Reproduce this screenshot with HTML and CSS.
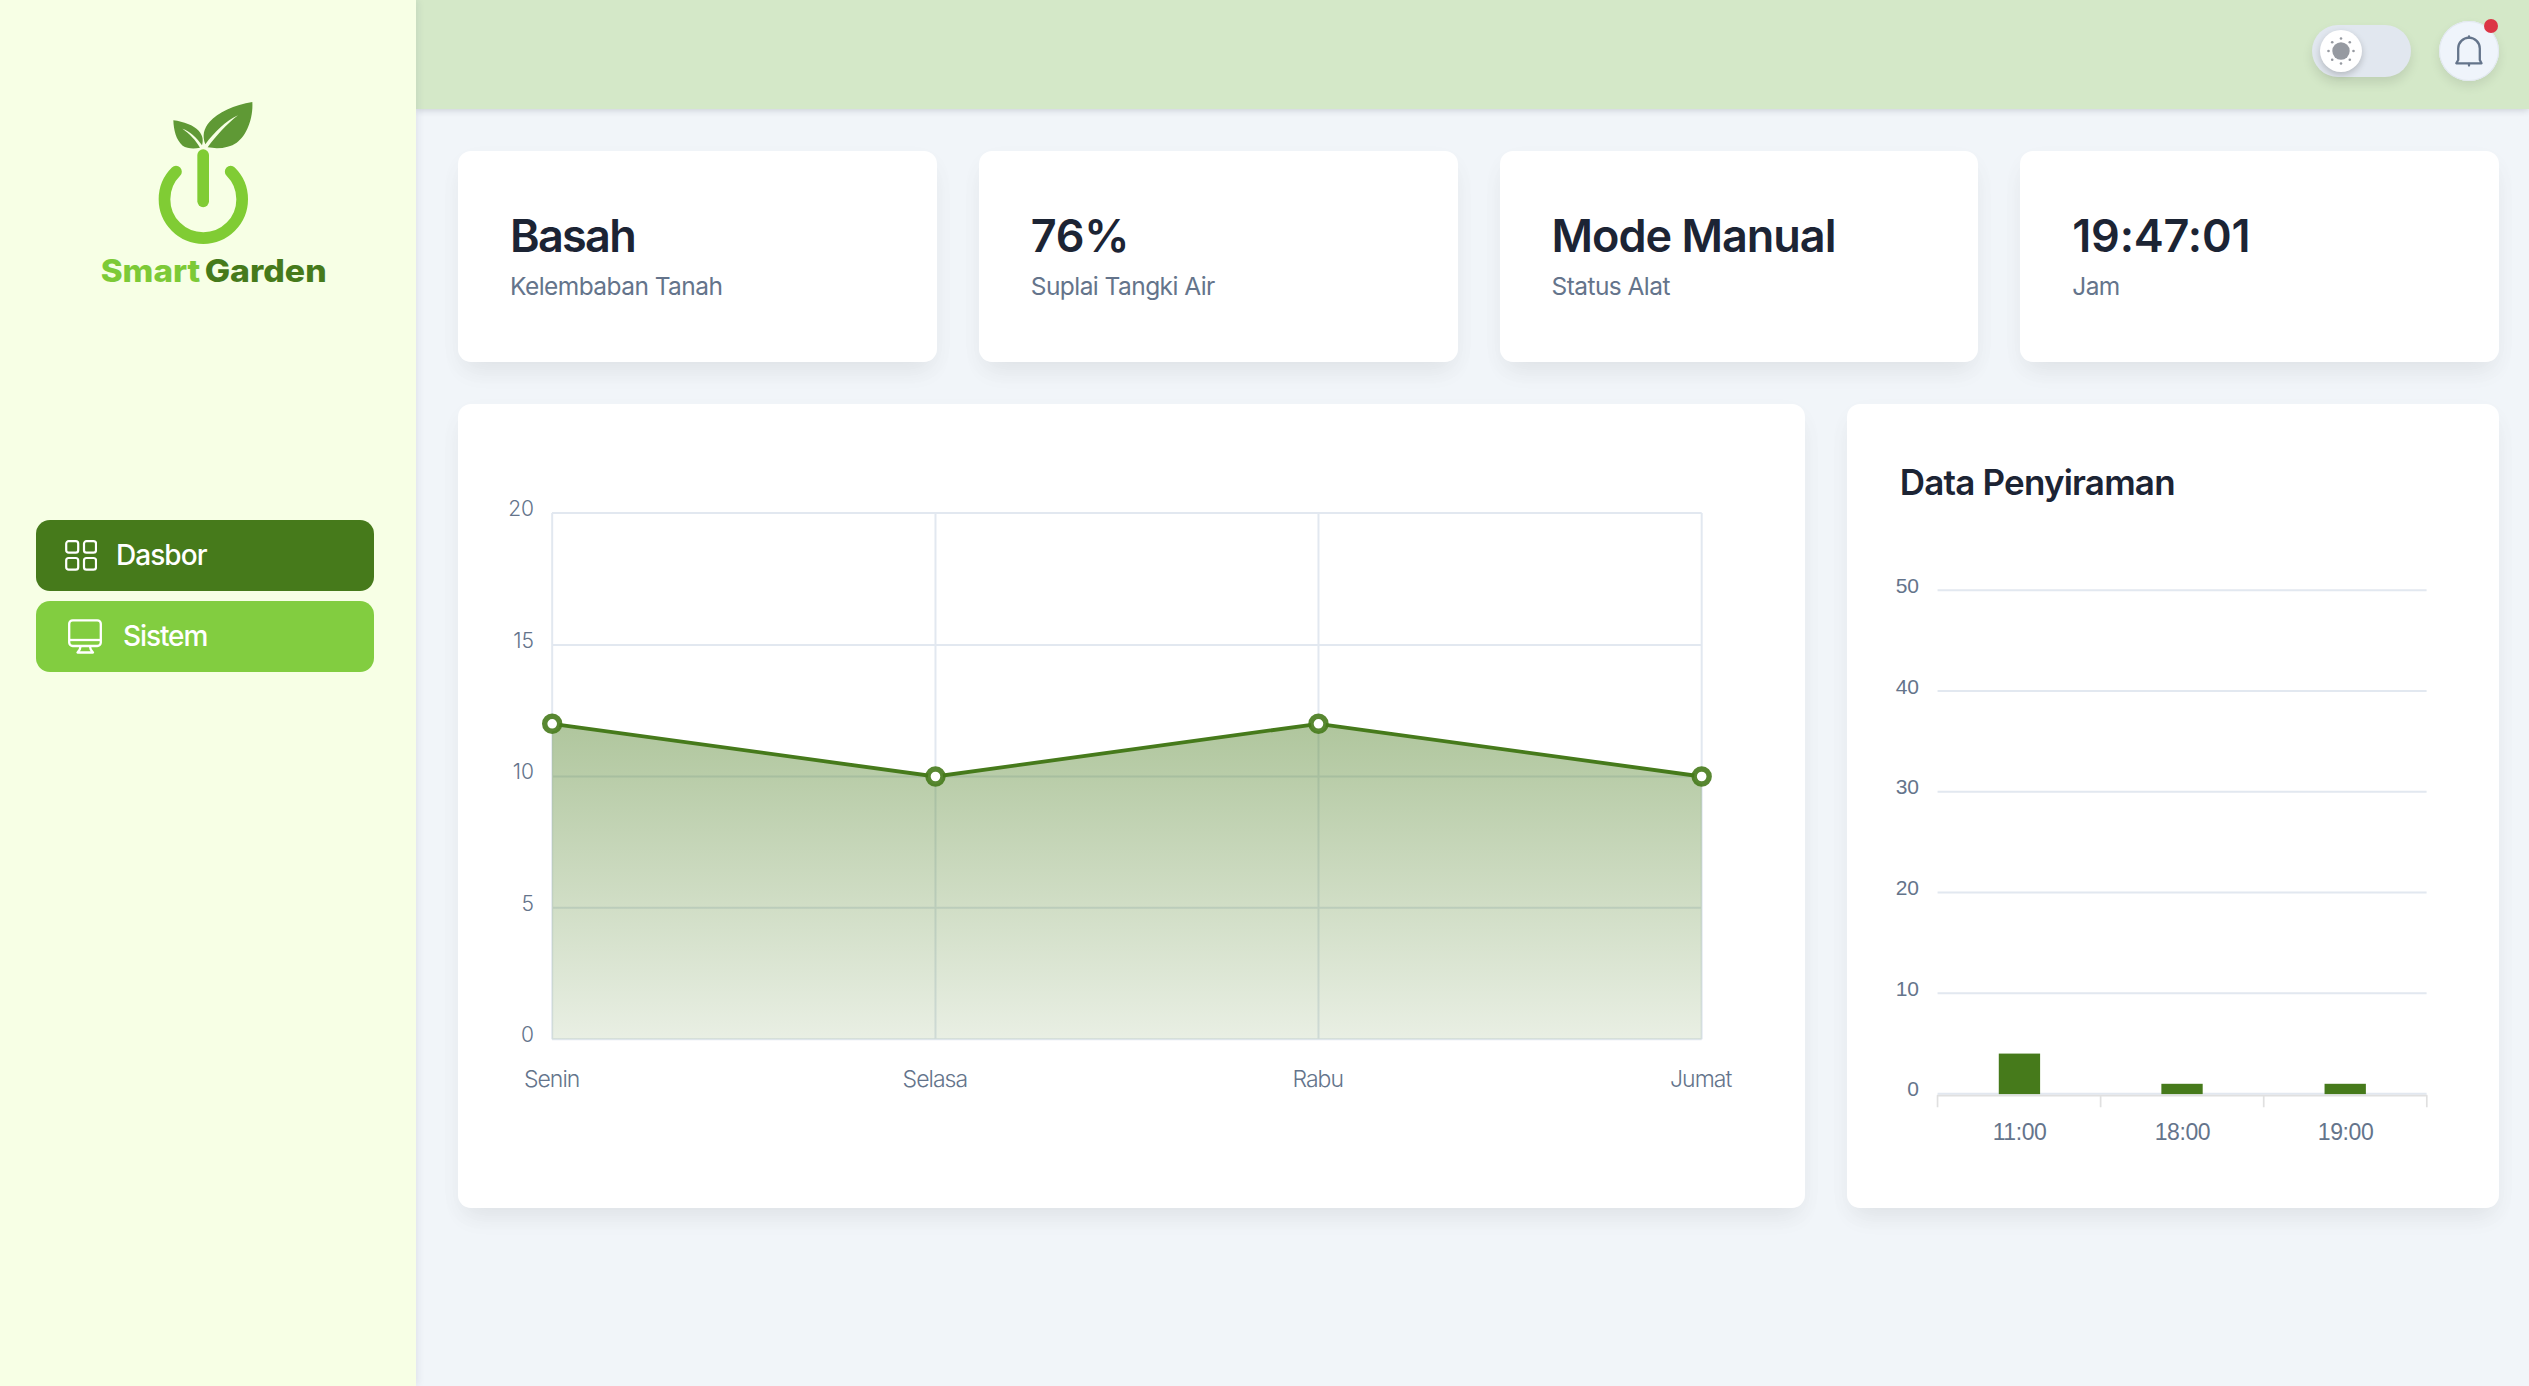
FILE: index.html
```html
<!DOCTYPE html>
<html lang="id">
<head>
<meta charset="utf-8">
<title>Smart Garden</title>
<link rel="stylesheet" href="styles.css">
</head>
<body>
<div class="app">
  <aside class="sidebar">
    <svg class="logo" viewBox="0 0 810 660" role="img" aria-label="Smart Garden">
      <g fill="none" stroke="#80cc34" stroke-width="35" stroke-linecap="round">
        <path d="M288 275A116.500 116.500 0 1 0 452 275"/>
        <path d="M369.500 225V364"/>
      </g>
      <g fill="#5f9935">
        <path d="M517 66C464 74 412 99 389 125C371 146 366 166 376 193C402 158 439 121 474 106C441 132 409 166 383 202C417 208 448 203 470 188C500 167 520 115 517 66Z"/>
        <path d="M280 121C311 125 341 136 356 152C370 168 370 182 366 196C350 172 329 153 307 146C329 161 348 181 360 203C342 207 321 206 308 197C288 180 281 150 280 121Z"/>
      </g>
      <text class="logo-word logo-word-light" x="62" y="605" textLength="299" lengthAdjust="spacingAndGlyphs">Smart</text>
      <text class="logo-word logo-word-dark" x="374" y="605" textLength="366" lengthAdjust="spacingAndGlyphs">Garden</text>
    </svg>
    <nav class="menu">
      <a class="menu-item menu-item-active">
        <svg class="icon-grid" viewBox="0 0 32 31" fill="none" stroke="#fff" stroke-width="2.200">
          <rect x="1.200" y="1.200" width="12" height="11.500" rx="2.500"/><rect x="19" y="1.200" width="12" height="11.500" rx="2.500"/>
          <rect x="1.200" y="18" width="12" height="11.700" rx="2.500"/><rect x="19" y="18" width="12" height="11.700" rx="2.500"/>
        </svg>
        <span>Dasbor</span>
      </a>
      <a class="menu-item menu-item-system">
        <svg class="icon-screen" viewBox="0 0 34 35" fill="none" stroke="#fff" stroke-width="2.300" stroke-linejoin="round">
          <rect x="1.200" y="1.300" width="31.600" height="25.700" rx="3.500"/>
          <path d="M1 21H33"/><path d="M12.500 27.500C12.500 30 11.500 31.500 9.500 33.500H25C23 31.500 22 30 22 27.500"/>
        </svg>
        <span>Sistem</span>
      </a>
    </nav>
  </aside>

  <div class="page">
    <header class="topbar">
      <div class="toggle">
        <div class="knob">
          <svg viewBox="0 0 42 42" fill="#969aa1">
            <circle cx="21" cy="21" r="8.700"/>
            <circle cx="21" cy="8.500" r="1.300"/><circle cx="21" cy="33.500" r="1.300"/><circle cx="8.500" cy="21" r="1.300"/><circle cx="33.500" cy="21" r="1.300"/>
            <circle cx="12.200" cy="12.200" r="1.300"/><circle cx="29.800" cy="12.200" r="1.300"/><circle cx="12.200" cy="29.800" r="1.300"/><circle cx="29.800" cy="29.800" r="1.300"/>
          </svg>
        </div>
      </div>
      <div class="bell">
        <svg viewBox="0 0 60 60" fill="none" stroke="#64748b" stroke-width="2.300" stroke-linecap="round" stroke-linejoin="round">
          <path d="M30 15.300V16.800M30 43V44.600"/>
          <path d="M19.200 39V27.500A10.800 10.800 0 0 1 40.800 27.500V39L42.500 42.300H17.300L19.200 39"/>
        </svg>
        <span class="bell-dot"></span>
      </div>
    </header>

    <main class="content">
      <section class="card stat"><h4 class="value value-tight">Basah</h4><p class="label">Kelembaban Tanah</p></section>
      <section class="card stat"><h4 class="value value-digits">76%</h4><p class="label">Suplai Tangki Air</p></section>
      <section class="card stat"><h4 class="value">Mode Manual</h4><p class="label">Status Alat</p></section>
      <section class="card stat"><h4 class="value value-digits">19:47:01</h4><p class="label">Jam</p></section>

      <section class="card chart-wide">
        <svg class="chart" viewBox="458 404 1347 804">
          <defs>
            <linearGradient id="area" x1="0" y1="0" x2="0" y2="1">
              <stop offset="0" stop-color="#467a1b" stop-opacity=".43"/>
              <stop offset="1" stop-color="#467a1b" stop-opacity=".12"/>
            </linearGradient>
          </defs>
          <g class="grid">
            <path d="M552 513H1702M552 645H1702M552 776.500H1702M552 908H1702M552 1039.500H1702"/>
            <path d="M552.200 513V1039.500M935.600 513V1039.500M1318.700 513V1039.500M1702 513V1039.500"/>
          </g>
          <path fill="url(#area)" d="M552.200 723.900L935.600 776.600L1318.700 723.900L1702 776.600V1039.500H552.200Z"/>
          <path class="series" d="M552.200 723.900L935.600 776.600L1318.700 723.900L1702 776.600"/>
          <g class="markers">
            <circle cx="552.200" cy="723.900" r="7.500"/><circle cx="935.600" cy="776.600" r="7.500"/>
            <circle cx="1318.700" cy="723.900" r="7.500"/><circle cx="1702" cy="776.600" r="7.500"/>
          </g>
          <g class="axis axis-y">
            <text x="534" y="516">20</text><text x="534" y="648">15</text><text x="534" y="779">10</text><text x="534" y="911">5</text><text x="534" y="1042">0</text>
          </g>
          <g class="axis axis-x">
            <text x="551.700" y="1087">Senin</text><text x="935" y="1087">Selasa</text><text x="1318" y="1087">Rabu</text><text x="1701" y="1087">Jumat</text>
          </g>
        </svg>
      </section>

      <section class="card chart-side">
        <h5 class="chart-title">Data Penyiraman</h5>
        <svg class="chart" viewBox="1847 505 652 703">
          <path class="grid" d="M1937.500 590.300H2426.300M1937.500 691H2426.300M1937.500 791.700H2426.300M1937.500 892.300H2426.300M1937.500 993H2426.300M1937.500 1093.500H2426.300"/>
          <path class="ticks" d="M1937 1095.300H2427M1937.500 1095V1107M2100.500 1095V1107M2263.500 1095V1107M2426.500 1095V1107"/>
          <g class="bars">
            <rect x="1998.700" y="1053.300" width="41.300" height="40.500"/><rect x="2161.200" y="1083.500" width="41.300" height="10.300"/><rect x="2324.300" y="1083.500" width="41.300" height="10.300"/>
          </g>
          <g class="axis axis-bar-y">
            <text x="1919" y="593">50</text><text x="1919" y="694">40</text><text x="1919" y="794">30</text><text x="1919" y="895">20</text><text x="1919" y="996">10</text><text x="1919" y="1096">0</text>
          </g>
          <g class="axis axis-bar-x">
            <text x="2019.500" y="1140">11:00</text><text x="2182.300" y="1140">18:00</text><text x="2345.300" y="1140">19:00</text>
          </g>
        </svg>
      </section>
    </main>
  </div>
</div>
</body>
</html>
```
FILE: styles.css
```css
* { box-sizing: border-box; }
body { margin: 0; font-family: Inter, "Liberation Sans", sans-serif; background: #f1f5f9; color: #1c2434; }
h4, h5, p { margin: 0; font-weight: 580; }

.app { display: flex; height: 1386px; overflow: hidden; }
.sidebar { position: relative; z-index: 2; width: 416px; flex: none; padding-top: 80px; background: #f7ffe5; box-shadow: 2px 0 7px rgba(30, 40, 90, .08); }
.logo { display: block; width: 270px; height: 220px; margin-left: 80px; }
.logo-word { font-size: 92px; font-weight: 800; }
.logo-word-light { fill: #7dca37; }
.logo-word-dark { fill: #467a1b; }

.menu { display: flex; flex-direction: column; gap: 10px; margin: 220px 42px 0 36px; }
.menu-item { display: flex; align-items: center; height: 71px; padding-left: 29px; gap: 19px; border-radius: 14px; background: #82cd40; color: #fff; font-size: 28px; font-weight: 500; letter-spacing: -.95px; }
.menu-item span { margin-top: -1px; }
.menu-item-active { background: #467a1b; }
.menu-item-system { padding-left: 32px; gap: 21px; letter-spacing: -1.1px; }
.icon-grid { width: 32px; height: 31px; }
.icon-screen { width: 34px; height: 35px; }

.page { flex: 1; min-width: 0; }
.topbar { position: relative; z-index: 1; display: flex; justify-content: flex-end; align-items: center; gap: 28px; height: 109px; padding: 0 30px 7px 0; background: #d4e8c8; box-shadow: 0 1px 7px rgba(30, 40, 60, .2); }
.toggle { width: 99px; height: 52px; padding: 5px 8px; border-radius: 26px; background: #e1e7ef; box-shadow: 0 6px 11px rgba(0, 0, 0, .1); }
.knob { width: 42px; height: 42px; border-radius: 50%; background: #fff; box-shadow: 0 3px 7px rgba(0, 0, 0, .2); }
.knob svg, .bell svg { display: block; }
.bell { position: relative; width: 60px; height: 60px; border-radius: 50%; background: #eff4fb; box-shadow: inset 0 0 0 1px #e2e8f0, 0 5px 11px rgba(0, 0, 0, .09); }
.bell-dot { position: absolute; right: 1px; top: -2px; width: 14px; height: 14px; border-radius: 50%; background: #dc3545; }

.content { display: grid; grid-template-columns: repeat(12, 1fr); grid-template-rows: 211px 804px; gap: 42px; padding: 42px 30px 0 42px; }
.card { border-radius: 13px; background: #fff; box-shadow: 0 14px 24px -5px rgba(0, 0, 0, .06), 0 8px 28px rgba(0, 0, 0, .025); }
.stat { grid-column: span 3; padding: 55px 0 0 52px; }
.value { font-size: 45px; line-height: 60px; letter-spacing: -1px; }
.value-tight { letter-spacing: -1.7px; }
.value-digits { letter-spacing: -.2px; }
.label { margin-top: 2px; font-size: 24.5px; line-height: 36px; font-weight: 400; letter-spacing: -.56px; color: #64748b; }

.chart-wide { grid-column: span 8; }
.chart-side { grid-column: span 4; }
.chart-title { padding: 55px 0 0 53px; font-size: 35px; line-height: 46px; letter-spacing: -.8px; }
.chart { display: block; width: 100%; height: auto; }
.grid { fill: none; stroke: #e2e8f0; stroke-width: 2; }
.series { fill: none; stroke: #467a1b; stroke-width: 3.8; }
.markers { fill: #fff; stroke: #467a1b; stroke-opacity: .9; stroke-width: 5.4; }
.ticks { fill: none; stroke: #e0e0e0; stroke-width: 1.7; }
.bars { fill: #467a1b; }
.axis { fill: #64748b; }
.axis-y { font-size: 21px; font-weight: 300; text-anchor: end; }
.axis-x { font-size: 23px; font-weight: 300; text-anchor: middle; letter-spacing: -.95px; }
.axis-bar-y { font: 21px "Liberation Sans", Arial, sans-serif; text-anchor: end; }
.axis-bar-x { font: 23px "Liberation Sans", Arial, sans-serif; text-anchor: middle; letter-spacing: -.4px; }
```
